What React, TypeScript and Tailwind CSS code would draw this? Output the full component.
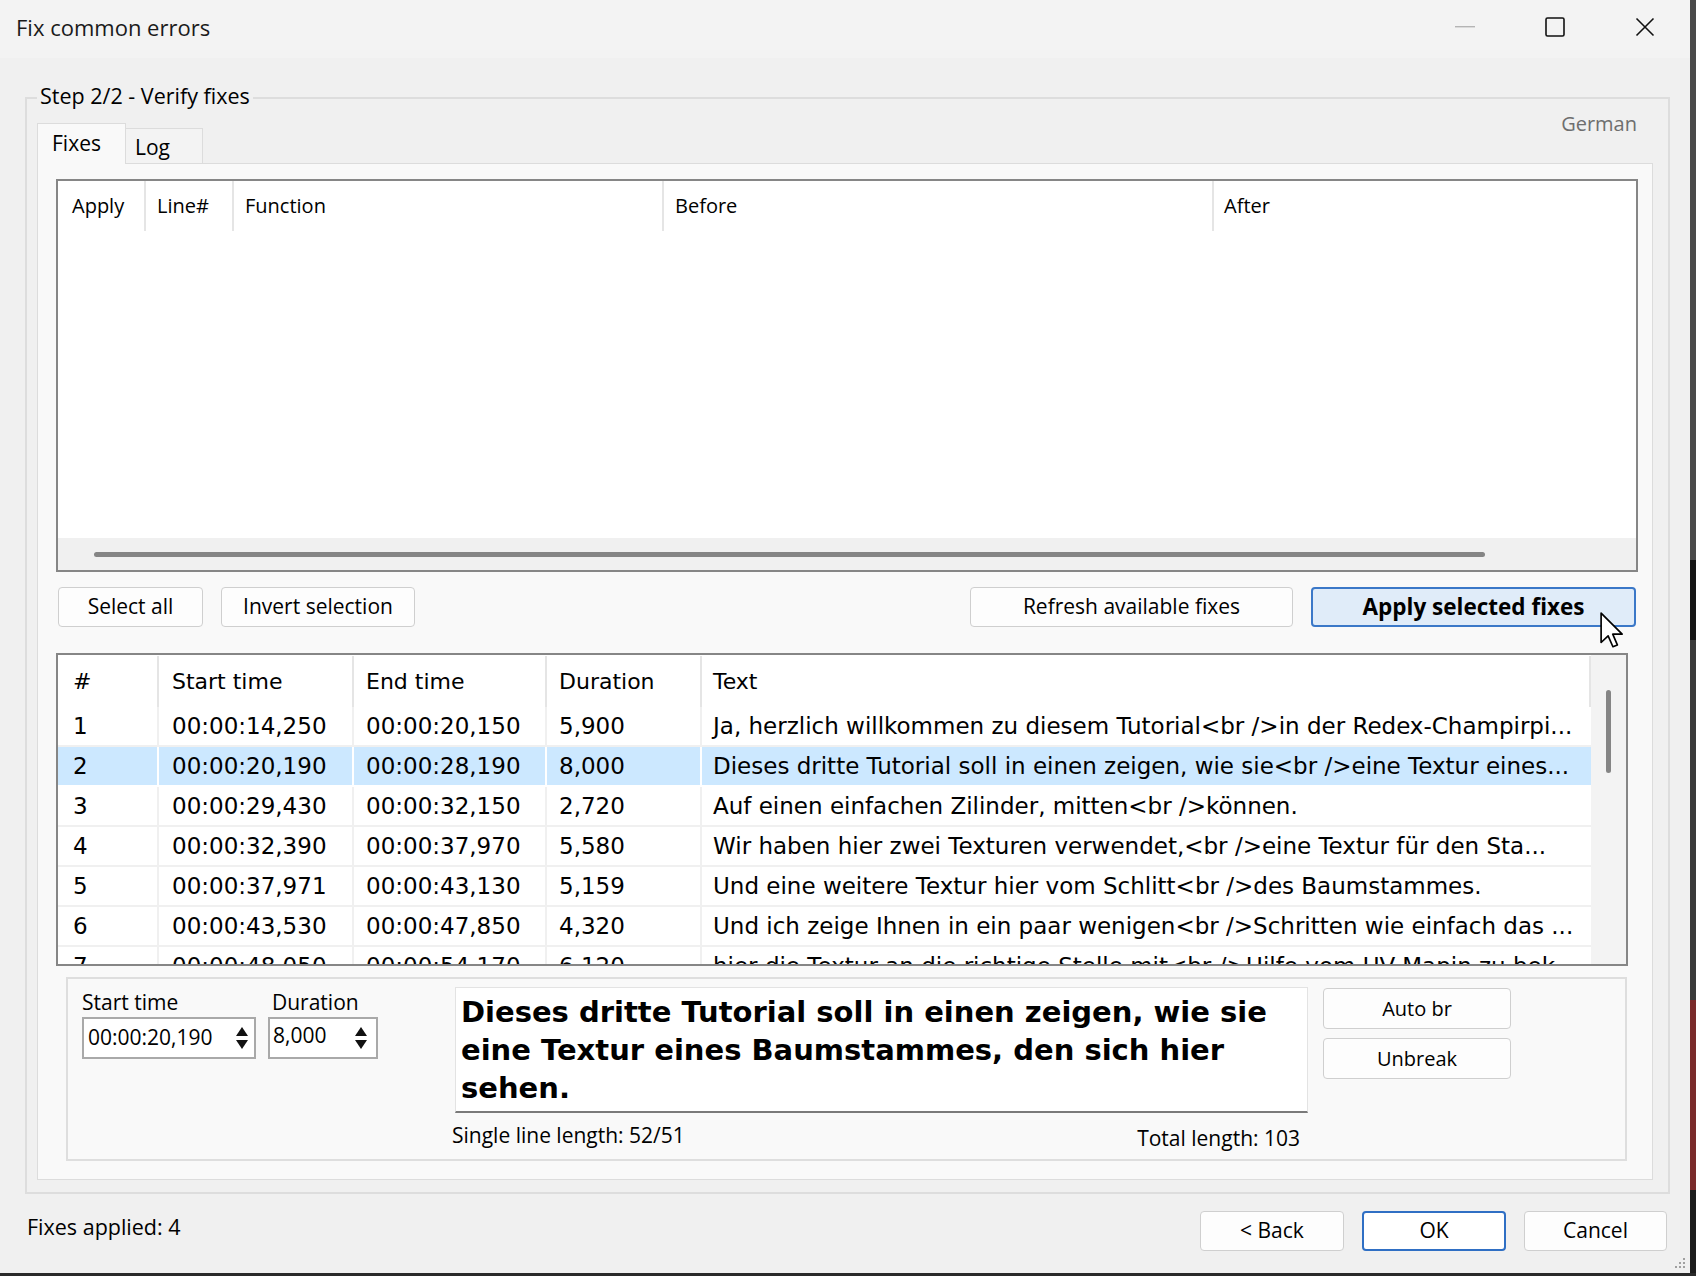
import React from 'react';

const ui = "font-['Open_Sans',sans-serif]";
const grid = "font-['DejaVu_Sans',sans-serif]";

const rows = [
  ['1', '00:00:14,250', '00:00:20,150', '5,900', 'Ja, herzlich willkommen zu diesem Tutorial<br />in der Redex-Champirpi...'],
  ['2', '00:00:20,190', '00:00:28,190', '8,000', 'Dieses dritte Tutorial soll in einen zeigen, wie sie<br />eine Textur eines...'],
  ['3', '00:00:29,430', '00:00:32,150', '2,720', 'Auf einen einfachen Zilinder, mitten<br />können.'],
  ['4', '00:00:32,390', '00:00:37,970', '5,580', 'Wir haben hier zwei Texturen verwendet,<br />eine Textur für den Sta...'],
  ['5', '00:00:37,971', '00:00:43,130', '5,159', 'Und eine weitere Textur hier vom Schlitt<br />des Baumstammes.'],
  ['6', '00:00:43,530', '00:00:47,850', '4,320', 'Und ich zeige Ihnen in ein paar wenigen<br />Schritten wie einfach das ...'],
  ['7', '00:00:48,050', '00:00:54,170', '6,120', 'hier die Textur an die richtige Stelle mit<br />Hilfe vom UV-Mapin zu bek...'],
];

function Btn({ className, children }: { className: string; children: React.ReactNode }) {
  return (
    <div className={`flex items-center justify-center rounded-[4px] border border-[#cfcfcf] bg-[#fdfdfd] text-[20px] text-black ${className}`}>
      {children}
    </div>
  );
}

function Spin() {
  return (
    <svg width="14" height="26" viewBox="0 0 14 26">
      <polygon points="1,11 7,2 13,11" fill="#111" />
      <polygon points="1,15 7,24 13,15" fill="#111" />
    </svg>
  );
}

function SubtitleRow({ r, sel }: { r: string[]; sel: boolean }) {
  const line = sel ? 'border-white' : 'border-[#f0f0f0]';
  return (
    <div className={`flex h-[40px] shrink-0 border-b-2 ${line} ${sel ? 'bg-[#cce8ff]' : ''}`}>
      <div className={`flex w-[101px] shrink-0 items-center border-r-2 ${line} pl-[15px]`}>{r[0]}</div>
      <div className={`flex w-[195px] shrink-0 items-center border-r-2 ${line} pl-[13px]`}>{r[1]}</div>
      <div className={`flex w-[193px] shrink-0 items-center border-r-2 ${line} pl-[12px]`}>{r[2]}</div>
      <div className={`flex w-[155px] shrink-0 items-center border-r-2 ${line} pl-[12px]`}>{r[3]}</div>
      <div className="flex min-w-0 flex-1 items-center overflow-hidden whitespace-nowrap pl-[11px]">{r[4]}</div>
    </div>
  );
}

export default function App() {
  return (
    <div className={`flex h-[1276px] w-[1696px] flex-col overflow-hidden bg-[#202020] ${ui}`}>
      <div className="flex h-[1273px]">
        <div className="relative flex h-[1273px] w-[1690px] flex-col bg-[#f0f0f0] text-black">
          {/* title bar */}
          <div className="flex h-[58px] shrink-0 items-center bg-[#f3f3f3] pb-[4px]">
            <span className="pl-[16px] text-[22px] text-[#1a1a1a]">Fix common errors</span>
            <div className="ml-auto flex h-full">
              <div className="flex w-[90px] items-center justify-center">
                <svg width="20" height="2" viewBox="0 0 20 2"><rect width="20" height="1.4" fill="#b4b4b4" /></svg>
              </div>
              <div className="flex w-[90px] items-center justify-center">
                <svg width="20" height="20" viewBox="0 0 20 20"><rect x="1" y="1" width="18" height="18" rx="1.5" fill="none" stroke="#111" strokeWidth="1.6" /></svg>
              </div>
              <div className="flex w-[90px] items-center justify-center">
                <svg width="20" height="20" viewBox="0 0 20 20"><path d="M1.5 1.5 L18.5 18.5 M18.5 1.5 L1.5 18.5" stroke="#111" strokeWidth="1.6" /></svg>
              </div>
            </div>
          </div>

          {/* group box */}
          <div className="relative ml-[25px] mt-[39px] flex h-[1097px] w-[1645px] flex-col border-2 border-[#dddddd]">
            <div className="absolute left-[10px] top-[-17px] bg-[#f0f0f0] px-[3px] text-[21.5px] leading-[28px]">Step 2/2 - Verify fixes</div>

            <div className="ml-[10px] mt-[9px] flex h-[55px] w-[1616px] items-end justify-between">
              <div className="flex items-end">
                <div className="relative z-10 -mb-[1px] flex h-[41px] w-[89px] items-center border-x border-t border-[#dcdcdc] bg-[#f9f9f9] pl-[14px] text-[21px]">Fixes</div>
                <div className="flex h-[35px] w-[77px] items-center border-r border-t border-[#dcdcdc] bg-[#f3f3f3] pl-[9px] pt-[3px] text-[21px]">Log</div>
              </div>
              <div className="mb-auto mt-[2px] pr-[16px] text-[20px] leading-[28px] text-[#6e6e6e]">German</div>
            </div>

            {/* tab panel */}
            <div className="ml-[10px] flex h-[1017px] w-[1616px] flex-col border border-[#dcdcdc] bg-[#f9f9f9] pl-[18px] pt-[15px]">
              {/* fixes list */}
              <div className="flex h-[393px] w-[1582px] flex-col border-2 border-[#868686] bg-white">
                <div className="flex h-[50px] shrink-0 text-[20px]">
                  <div className="flex w-[88px] items-center border-r-2 border-[#e5e5e5] pl-[14px]">Apply</div>
                  <div className="flex w-[88px] items-center border-r-2 border-[#e5e5e5] pl-[11px]">Line#</div>
                  <div className="flex w-[430px] items-center border-r-2 border-[#e5e5e5] pl-[11px]">Function</div>
                  <div className="flex w-[550px] items-center border-r-2 border-[#e5e5e5] pl-[11px]">Before</div>
                  <div className="flex flex-1 items-center pl-[10px]">After</div>
                </div>
                <div className="flex-1" />
                <div className="flex h-[32px] shrink-0 items-center bg-[#f0f0f0] pl-[36px]">
                  <div className="h-[5px] w-[1391px] rounded-full bg-[#858585]" />
                </div>
              </div>

              {/* buttons */}
              <div className="ml-[2px] mt-[15px] flex h-[40px] w-[1578px] justify-between">
                <div className="flex gap-[18px]">
                  <Btn className="h-[40px] w-[145px] text-[21px]">Select all</Btn>
                  <Btn className="h-[40px] w-[194px] text-[21px]">Invert selection</Btn>
                </div>
                <div className="flex gap-[18px]">
                  <Btn className="h-[40px] w-[323px] text-[21px]">Refresh available fixes</Btn>
                  <div className="flex h-[40px] w-[325px] items-center justify-center rounded-[4px] border-2 border-[#3b78c8] bg-[#e0ecf9] text-[22.5px] font-bold">Apply selected fixes</div>
                </div>
              </div>

              {/* subtitle list */}
              <div className={`mt-[26px] flex h-[313px] w-[1572px] border-2 border-[#868686] bg-white text-[23px] ${grid}`}>
                <div className="flex min-w-0 flex-1 flex-col overflow-hidden">
                  <div className="flex h-[52px] shrink-0 pt-[1px] text-[22px]">
                    <div className="flex w-[101px] shrink-0 items-center border-r-2 border-[#e5e5e5] pl-[15px]">#</div>
                    <div className="flex w-[195px] shrink-0 items-center border-r-2 border-[#e5e5e5] pl-[13px]">Start time</div>
                    <div className="flex w-[193px] shrink-0 items-center border-r-2 border-[#e5e5e5] pl-[12px]">End time</div>
                    <div className="flex w-[155px] shrink-0 items-center border-r-2 border-[#e5e5e5] pl-[12px]">Duration</div>
                    <div className="flex flex-1 items-center border-r-2 border-[#e5e5e5] pl-[11px]">Text</div>
                  </div>
                  {rows.map((r) => (
                    <SubtitleRow key={r[0]} r={r} sel={r[0] === '2'} />
                  ))}
                </div>
                <div className="flex w-[35px] shrink-0 justify-center bg-[#f3f3f3] pt-[35px]">
                  <div className="h-[83px] w-[5px] rounded-full bg-[#858585]" />
                </div>
              </div>

              {/* edit panel */}
              <div className="ml-[10px] mt-[11px] flex h-[184px] w-[1561px] items-start border-2 border-[#dedede]">
                <div className="ml-[14px] mt-[9px] flex gap-[12px]">
                  <div className="flex w-[174px] flex-col">
                    <div className="h-[28px] text-[21px] leading-[28px]">Start time</div>
                    <div className="mt-[1px] flex h-[42px] items-center justify-between border-2 border-[#a9a9a9] bg-white pl-[4px] pr-[5px] text-[21px]">
                      <span>00:00:20,190</span>
                      <Spin />
                    </div>
                  </div>
                  <div className="flex w-[110px] flex-col">
                    <div className="h-[28px] pl-[4px] text-[21px] leading-[28px]">Duration</div>
                    <div className="mt-[1px] flex h-[42px] items-center justify-between border-2 border-[#a9a9a9] bg-white pl-[3px] pr-[8px] text-[21px]">
                      <span className="-mt-[4px]">8,000</span>
                      <Spin />
                    </div>
                  </div>
                </div>

                <div className="ml-[77px] mt-[8px] flex w-[853px] flex-col">
                  <div className="h-[126px] w-[853px] border border-b-2 border-[#e3e3e3] border-b-[#7a7a7a] bg-white pl-[5px] pt-[5px] font-['DejaVu_Sans',sans-serif] text-[29px] font-bold leading-[38px]">
                    Dieses dritte Tutorial soll in einen zeigen, wie sie
                    <br />
                    eine Textur eines Baumstammes, den sich hier
                    <br />
                    sehen.
                  </div>
                  <div className="mt-[8px] flex h-[28px] justify-between text-[21px] leading-[28px]">
                    <span className="-ml-[3px]">Single line length: 52/51</span>
                    <span className="mt-[3px] pr-[8px]">Total length: 103</span>
                  </div>
                </div>

                <div className="ml-[15px] mt-[9px] flex flex-col gap-[9px]">
                  <Btn className="h-[41px] w-[188px]">Auto br</Btn>
                  <Btn className="h-[41px] w-[188px]">Unbreak</Btn>
                </div>
              </div>
            </div>
          </div>

          {/* bottom bar */}
          <div className="mt-[17px] flex h-[40px] items-center">
            <span className="-mt-[8px] pl-[27px] text-[21.5px]">Fixes applied: 4</span>
            <div className="ml-auto flex gap-[18px] pr-[23px]">
              <Btn className="h-[40px] w-[144px] text-[21px]">&lt; Back</Btn>
              <div className="flex h-[40px] w-[144px] items-center justify-center rounded-[4px] border-2 border-[#2f6fc4] bg-white text-[21px]">OK</div>
              <Btn className="h-[40px] w-[143px] text-[21px]">Cancel</Btn>
            </div>
          </div>

          {/* mouse cursor */}
          <svg className="absolute left-[1600px] top-[612px]" width="24" height="37" viewBox="0 0 13 20">
            <path d="M0.6 0.6 L0.6 16.5 L4.4 12.9 L7 18.8 L9.4 17.8 L6.9 12 L12 12 Z" fill="#fff" stroke="#000" strokeWidth="0.9" strokeLinejoin="round" />
          </svg>

          {/* resize grip */}
          <svg className="absolute bottom-[4px] right-[4px]" width="12" height="12" viewBox="0 0 12 12">
            <rect x="9" y="1" width="2" height="2" fill="#a0a0a0" />
            <rect x="9" y="5" width="2" height="2" fill="#a0a0a0" />
            <rect x="5" y="5" width="2" height="2" fill="#a0a0a0" />
            <rect x="9" y="9" width="2" height="2" fill="#a0a0a0" />
            <rect x="5" y="9" width="2" height="2" fill="#a0a0a0" />
            <rect x="1" y="9" width="2" height="2" fill="#a0a0a0" />
          </svg>
        </div>
        <div className="flex w-[6px] flex-col">
          <div className="h-[560px] bg-[#4a4a4a]" />
          <div className="h-[80px] bg-[#151515]" />
          <div className="h-[360px] bg-[#3a3a3a]" />
          <div className="h-[190px] bg-[#7a2a2a]" />
          <div className="flex-1 bg-[#1d1d1d]" />
        </div>
      </div>
      <div className="h-[3px] bg-[#2a2a2a]" />
    </div>
  );
}
